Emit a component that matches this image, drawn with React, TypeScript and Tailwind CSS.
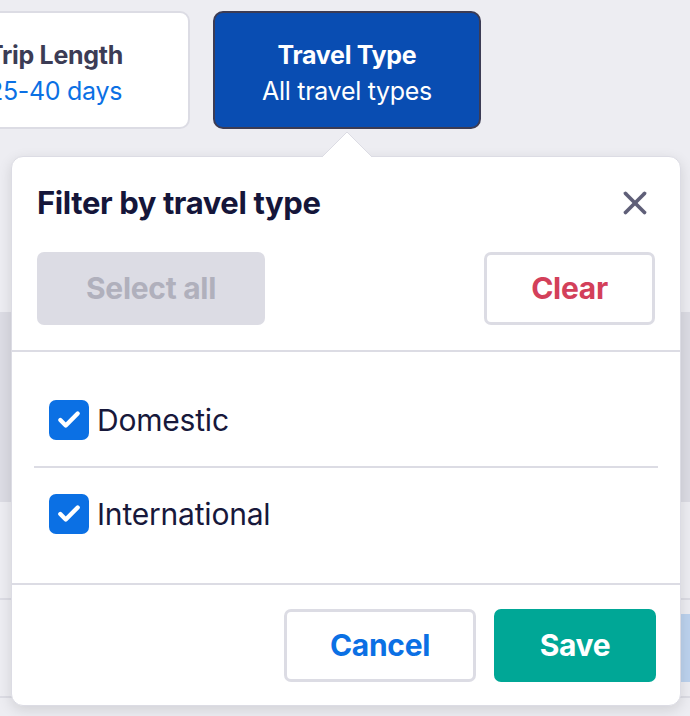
import { X, Check } from "lucide-react";

const font = { fontFamily: "Inter, 'Noto Sans', sans-serif" };

const Option = ({ label }: { label: string }) => (
  <label className="flex items-center gap-[8px] h-[92px] px-[15px]">
    <span className="w-[40px] h-[40px] rounded-[7px] bg-[#0b70e4] flex items-center justify-center">
      <Check className="w-[26px] h-[26px] text-white" strokeWidth={4} />
    </span>
    <span className="text-[30px] text-[#17183b] tracking-[-0.2px]">{label}</span>
  </label>
);

const App = () => {
  return (
    <div className="relative w-[690px] h-[716px] overflow-hidden bg-[#ededf2]" style={font}>
      <div className="flex gap-[23px] pt-[11px] ml-[-88px]">
        <div className="w-[278px] h-[118px] pt-[6px] pl-[8px] rounded-[10px] bg-white border-2 border-[#dcdce4] flex flex-col items-center justify-center">
          <span className="text-[25px] font-bold text-[#3c3c55] leading-[36px] tracking-[-0.3px]">Trip Length</span>
          <span className="text-[25px] text-[#0b70e4] leading-[36px] tracking-[-0.3px]">25-40 days</span>
        </div>
        <div className="w-[268px] h-[118px] pt-[6px] rounded-[10px] bg-[#094db2] border-2 border-[#3c3c55] flex flex-col items-center justify-center">
          <span className="text-[25px] font-bold text-white leading-[36px] tracking-[-0.3px]">Travel Type</span>
          <span className="text-[25px] text-white leading-[36px] tracking-[-0.3px]">All travel types</span>
        </div>
      </div>

      <div className="mt-[183px] h-[190px] bg-[#dcdce4]" />
      <div className="mt-[96px] border-t-2 border-[#dcdce4] h-[98px] flex items-center justify-end">
        <div className="w-[60px] h-[68px] bg-[#bcd2ee] flex items-center text-[30px] text-[#0b70e4] font-bold">
          <span className="ml-[-12px]">ain</span>
        </div>
      </div>
      <div className="border-t-2 border-[#dcdce4]" />

      {/* popover */}
      <div className="absolute left-[11px] top-[156px] w-[670px] h-[550px] rounded-[12px] bg-white border border-[#dcdce4] shadow-[0_4px_14px_rgba(0,0,0,0.12)]">
        <svg className="absolute left-[310px] top-[-26px]" width="50" height="27" viewBox="0 0 50 27">
          <path d="M0 26 L25 1 L50 26" fill="white" stroke="#dcdce4" strokeWidth="1" />
          <rect x="0" y="26" width="50" height="2" fill="white" />
        </svg>
        <div className="flex items-center justify-between pl-[25px] pr-[26px] pt-[27px]">
          <h2 className="text-[31px] font-bold text-[#15163a] tracking-[-0.4px] leading-[38px]">Filter by travel type</h2>
          <X className="w-[38px] h-[38px] text-[#5f5f78]" strokeWidth={2.4} />
        </div>
        <div className="flex justify-between px-[25px] mt-[30px]">
          <button className="w-[228px] h-[73px] rounded-[7px] bg-[#dcdce4] text-[30px] font-bold text-[#b0b0bc] tracking-[-0.3px]">Select all</button>
          <button className="w-[171px] h-[73px] rounded-[7px] border-[3px] border-[#dcdce4] text-[30px] font-bold text-[#d3405a] tracking-[-0.3px]">Clear</button>
        </div>
        <div className="mt-[25px] border-t-2 border-[#dcdce4]" />
        <div className="px-[22px] pt-[22px] pb-[23px]">
          <Option label="Domestic" />
          <div className="border-t-2 border-[#dcdce4]" />
          <Option label="International" />
        </div>
        <div className="border-t-2 border-[#dcdce4]" />
        <div className="flex justify-end gap-[18px] px-[24px] pt-[24px]">
          <button className="w-[192px] h-[73px] rounded-[7px] border-[3px] border-[#dcdce4] text-[30px] font-bold text-[#0b70e4] tracking-[-0.3px]">Cancel</button>
          <button className="w-[162px] h-[73px] rounded-[7px] bg-[#00a796] text-[30px] font-bold text-white tracking-[-0.3px]">Save</button>
        </div>
      </div>
    </div>
  );
};

export default App;
